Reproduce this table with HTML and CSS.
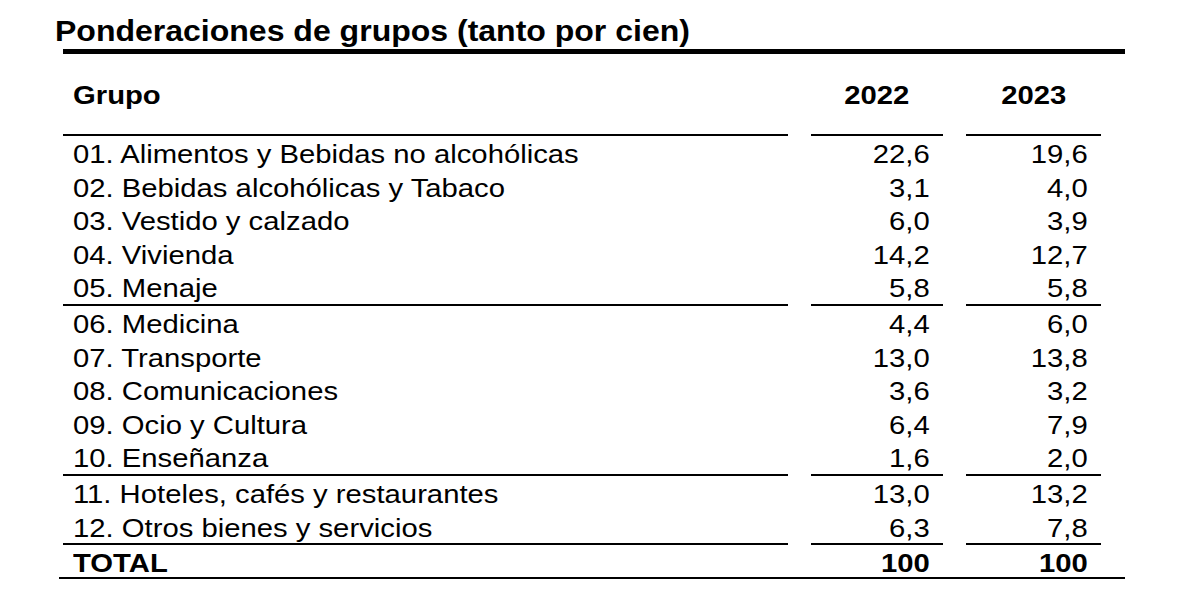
FILE: index.html
```html
<!DOCTYPE html>
<html lang="es">
<head>
<meta charset="utf-8">
<title>Ponderaciones de grupos</title>
<link rel="stylesheet" href="styles.css">
</head>
<body>
<div class="page">
  <h1 class="title"><span class="t">Ponderaciones de grupos (tanto por cien)</span></h1>
  <div class="table">
    <div class="row head">
      <div class="cell label"><span class="t">Grupo</span></div>
      <div class="cell year"><span class="t">2022</span></div>
      <div class="cell year"><span class="t">2023</span></div>
    </div>
    <div class="grp">
      <div class="row"><div class="cell label"><span class="t">01. Alimentos y Bebidas no alcohólicas</span></div><div class="cell num"><span class="t">22,6</span></div><div class="cell num"><span class="t">19,6</span></div></div>
      <div class="row"><div class="cell label"><span class="t">02. Bebidas alcohólicas y Tabaco</span></div><div class="cell num"><span class="t">3,1</span></div><div class="cell num"><span class="t">4,0</span></div></div>
      <div class="row"><div class="cell label"><span class="t">03. Vestido y calzado</span></div><div class="cell num"><span class="t">6,0</span></div><div class="cell num"><span class="t">3,9</span></div></div>
      <div class="row"><div class="cell label"><span class="t">04. Vivienda</span></div><div class="cell num"><span class="t">14,2</span></div><div class="cell num"><span class="t">12,7</span></div></div>
      <div class="row"><div class="cell label"><span class="t">05. Menaje</span></div><div class="cell num"><span class="t">5,8</span></div><div class="cell num"><span class="t">5,8</span></div></div>
    </div>
    <div class="grp">
      <div class="row"><div class="cell label"><span class="t">06. Medicina</span></div><div class="cell num"><span class="t">4,4</span></div><div class="cell num"><span class="t">6,0</span></div></div>
      <div class="row"><div class="cell label"><span class="t">07. Transporte</span></div><div class="cell num"><span class="t">13,0</span></div><div class="cell num"><span class="t">13,8</span></div></div>
      <div class="row"><div class="cell label"><span class="t">08. Comunicaciones</span></div><div class="cell num"><span class="t">3,6</span></div><div class="cell num"><span class="t">3,2</span></div></div>
      <div class="row"><div class="cell label"><span class="t">09. Ocio y Cultura</span></div><div class="cell num"><span class="t">6,4</span></div><div class="cell num"><span class="t">7,9</span></div></div>
      <div class="row"><div class="cell label"><span class="t">10. Enseñanza</span></div><div class="cell num"><span class="t">1,6</span></div><div class="cell num"><span class="t">2,0</span></div></div>
    </div>
    <div class="grp">
      <div class="row"><div class="cell label"><span class="t">11. Hoteles, cafés y restaurantes</span></div><div class="cell num"><span class="t">13,0</span></div><div class="cell num"><span class="t">13,2</span></div></div>
      <div class="row"><div class="cell label"><span class="t">12. Otros bienes y servicios</span></div><div class="cell num"><span class="t">6,3</span></div><div class="cell num"><span class="t">7,8</span></div></div>
    </div>
    <div class="row total">
      <div class="cell label"><span class="t">TOTAL</span></div>
      <div class="cell num"><span class="t">100</span></div>
      <div class="cell num"><span class="t">100</span></div>
    </div>
  </div>
</div>
</body>
</html>
```
FILE: styles.css
```css
html, body {
  margin: 0;
  padding: 0;
  background: #fff;
}

body {
  font-family: "Liberation Sans", Arial, sans-serif;
  color: #000;
}

.page {
  padding: 13px 0 0 55px;
}

.t {
  display: inline-block;
  white-space: nowrap;
  transform: scaleX(1.17);
  transform-origin: left center;
}

.title {
  margin: 0;
  font-size: 30px;
  line-height: 36px;
  font-weight: bold;
}

.title .t {
  transform: scaleX(1.067);
}

.table {
  margin-left: 8px;
  width: 1062px;
  border-top: 5px solid #000;
}

.row {
  display: grid;
  grid-template-columns: 725px 132px 135px;
  column-gap: 23px;
  font-size: 25px;
  line-height: 30.6px;
  height: 33.6px;
  box-sizing: border-box;
  padding-top: 3px;
}

.cell {
  white-space: nowrap;
}

.label {
  padding-left: 10px;
}

.num {
  text-align: right;
  padding-right: 13px;
}

.num .t {
  transform-origin: right center;
}

.head {
  height: 82px;
  padding-top: 0;
  font-weight: bold;
}

.head .cell {
  height: 82px;
  padding-top: 2px;
  line-height: 78px;
  border-bottom: 2px solid #000;
  box-sizing: border-box;
}

.head .year {
  text-align: center;
}

.head .year .t {
  transform-origin: center center;
}

.grp > .row:last-child .cell {
  border-bottom: 2px solid #000;
}

.grp > .row:last-child {
  height: 35.6px;
}

.total {
  font-weight: bold;
  height: 34px;
  border-bottom: 2px solid #000;
  margin-left: -4px;
  padding-left: 4px;
  width: 1066px;
}
```
